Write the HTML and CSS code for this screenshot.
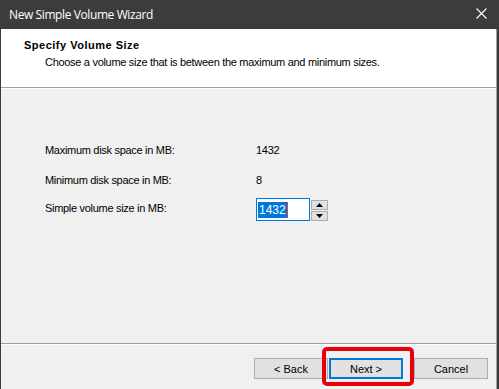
FILE: index.html
```html
<!DOCTYPE html>
<html>
  <head>
    <title>New Simple Volume Wizard</title>
    <link rel="stylesheet" href="styles.css">
  </head>
  <body>
    <div class="window">
      <div class="titlebar">
        <span class="title">New Simple Volume Wizard</span>
        <svg class="close" width="11" height="11" viewBox="0 0 11 11">
          <path d="M0.5 0.5 L10.5 10.5 M10.5 0.5 L0.5 10.5" stroke="#fff" stroke-width="1.1" fill="none"/>
        </svg>
      </div>

      <div class="content">
        <div class="header">
          <div class="header-title">Specify Volume Size</div>
          <div class="header-sub">Choose a volume size that is between the maximum and minimum sizes.</div>
        </div>

        <div class="main">
          <div class="field-row">
            <span class="label">Maximum disk space in MB:</span>
            <span class="value">1432</span>
          </div>
          <div class="field-row">
            <span class="label">Minimum disk space in MB:</span>
            <span class="value">8</span>
          </div>
          <div class="field-row input-row">
            <span class="label">Simple volume size in MB:</span>
            <div class="spinner">
              <div class="spin-input"><span class="selected">1432</span><span class="caret"></span></div>
              <div class="spin-buttons">
                <div class="spin-btn">
                  <svg width="7" height="4" viewBox="0 0 7 4"><path d="M3.5 0 L7 4 L0 4 Z" fill="#000"/></svg>
                </div>
                <div class="spin-btn">
                  <svg width="7" height="4" viewBox="0 0 7 4"><path d="M0 0 L7 0 L3.5 4 Z" fill="#000"/></svg>
                </div>
              </div>
            </div>
          </div>
        </div>

        <div class="footer">
          <button class="btn">&lt; Back</button>
          <button class="btn btn-default">Next &gt;<span class="highlight"></span></button>
          <button class="btn btn-cancel">Cancel</button>
        </div>
      </div>
    </div>
  </body>
</html>
```

FILE: styles.css
```css
body {
  margin: 0;
  font-family: "Liberation Sans", Arial, sans-serif;
  font-size: 11px;
  letter-spacing: -0.3px;
  color: #000;
}
.window {
  width: 499px;
  height: 389px;
  display: flex;
  flex-direction: column;
  background-color: #f0f0f0;
  border-left: 1px solid #3c3c3c;
  border-right: 2px solid #3c3c3c;
  box-sizing: border-box;
}
.titlebar {
  height: 29px;
  flex: none;
  display: flex;
  align-items: center;
  justify-content: space-between;
  background-color: #3c3c3c;
  color: white;
  padding: 0 12px 0 9px;
  margin-right: -2px;
  margin-left: -1px;
}
.title {
  font-family: "Open Sans", "Noto Sans", sans-serif;
  font-size: 12px;
  letter-spacing: -0.4px;
  margin-top: -1px;
}
.close {
  margin-top: -2px;
}
.content {
  flex: 1;
  display: flex;
  flex-direction: column;
  border-right: 1px solid #a0a0a0;
}
.header {
  height: 59px;
  flex: none;
  background-color: white;
  border-bottom: 1px solid #a0a0a0;
  box-sizing: border-box;
  padding: 9px 0 0 23px;
}
.header-title {
  font-weight: bold;
  font-size: 11px;
  letter-spacing: 0.5px;
  line-height: 14px;
}
.header-sub {
  margin-top: 3px;
  padding-left: 21px;
  line-height: 14px;
}
.main {
  flex: 1;
  border-top: 1px solid white;
  padding: 50px 0 0 44px;
  display: flex;
  flex-direction: column;
  gap: 8px;
}
.field-row {
  height: 22px;
  display: flex;
  align-items: center;
}
.label {
  width: 211px;
}
.input-row {
  height: 23px;
  margin-top: -1px;
  align-items: flex-start;
}
.input-row .label {
  margin-top: 4px;
}
.spinner {
  display: flex;
}
.spin-input {
  width: 51px;
  height: 21px;
  border: 1px solid #0078d7;
  background-color: white;
  display: flex;
  align-items: center;
  padding-left: 1px;
}
.selected {
  background-color: #0078d7;
  color: white;
  font-size: 12px;
  letter-spacing: 0;
  line-height: 16px;
  padding: 0 1px;
}
.caret {
  width: 1px;
  height: 16px;
  background-color: #e04040;
}
.spin-buttons {
  display: flex;
  flex-direction: column;
  gap: 1px;
  padding: 2px 0 0 1px;
}
.spin-btn {
  width: 15px;
  height: 8px;
  border: 1px solid #adadad;
  background-color: #e1e1e1;
  display: flex;
  align-items: center;
  justify-content: center;
}
.footer {
  height: 46px;
  flex: none;
  box-sizing: border-box;
  border-top: 1px solid #a0a0a0;
  box-shadow: inset 0 1px 0 white;
  display: flex;
  align-items: flex-start;
  padding: 14px 0 0 253px;
}
.btn {
  position: relative;
  width: 74px;
  height: 21px;
  margin: 0;
  padding: 0;
  font-family: "Liberation Sans", Arial, sans-serif;
  font-size: 11px;
  color: #000;
  background-color: #e1e1e1;
  border: 1px solid #adadad;
}
.btn-default {
  margin-left: 1px;
  border: 2px solid #0078d7;
}
.btn-cancel {
  margin-left: 11px;
}
.highlight {
  position: absolute;
  left: -9px;
  right: -13px;
  top: -13px;
  bottom: -9px;
  border: 4px solid #e8000b;
  border-radius: 5px;
}
```
